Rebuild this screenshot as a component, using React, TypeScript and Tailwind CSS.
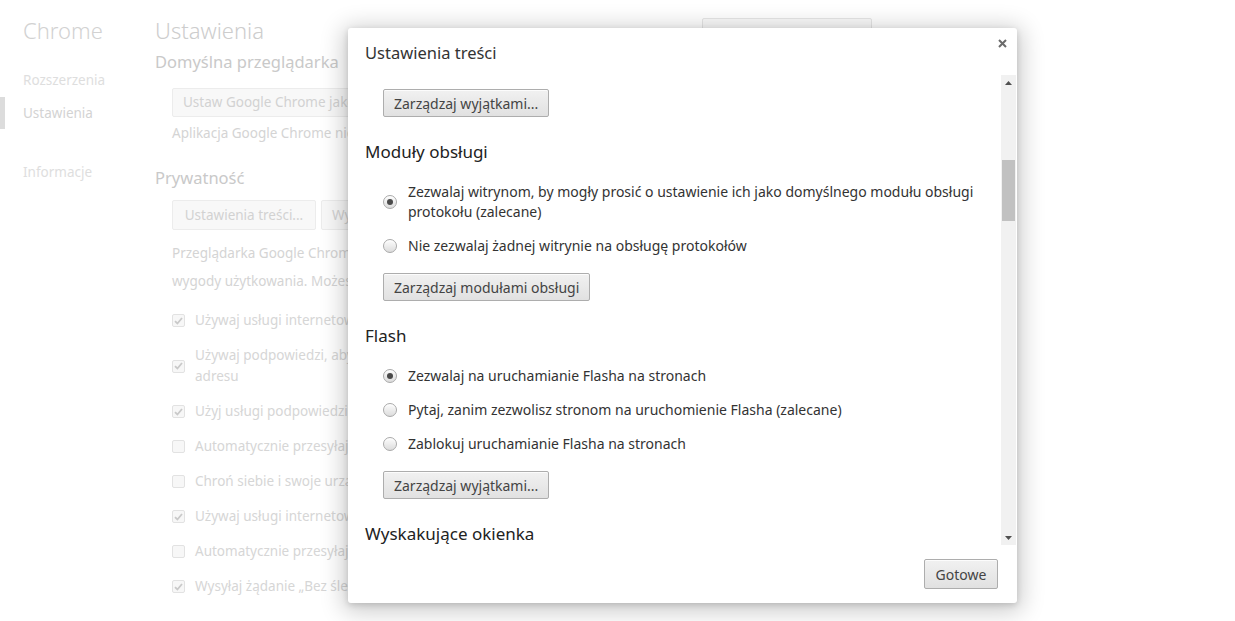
import React from 'react'

const font = { fontFamily: '"Noto Sans", "Open Sans", Arial, sans-serif' }

function FadedCheck({ checked }: { checked: boolean }) {
  return (
    <span className="w-[13px] h-[13px] shrink-0 rounded-[2px] border border-[#e2e2e2] bg-[#f7f7f7] flex items-center justify-center">
      {checked && (
        <svg width="9" height="8" viewBox="0 0 9 8">
          <path d="M1 4.2 L3.4 6.5 L8 1" fill="none" stroke="#c9c9c9" strokeWidth="1.8" />
        </svg>
      )}
    </span>
  )
}

function Radio({ checked }: { checked?: boolean }) {
  return (
    <span className="w-[14px] h-[14px] shrink-0 rounded-full border border-[#a9a9a9] bg-gradient-to-b from-[#fdfdfd] to-[#dcdcdc] shadow-[inset_0_1px_1px_rgba(255,255,255,0.9)] flex items-center justify-center">
      {checked && <span className="w-[6px] h-[6px] rounded-full bg-[#4a4a4a]" />}
    </span>
  )
}

function Btn({ children }: { children: React.ReactNode }) {
  return (
    <button className="h-[28px] px-[10px] rounded-[2px] border border-[#adadad] bg-gradient-to-b from-[#f1f1f1] to-[#e1e1e1] text-[14px] text-[#444] shadow-[inset_0_1px_0_rgba(255,255,255,0.8)]">
      {children}
    </button>
  )
}

function Option({ checked, children }: { checked?: boolean; children: React.ReactNode }) {
  return (
    <label className="flex items-center gap-[11px] pr-[8px]">
      <Radio checked={checked} />
      <span className="text-[14px] leading-[20px] text-[#333]">{children}</span>
    </label>
  )
}

function Section({ title, children }: { title: string; children?: React.ReactNode }) {
  return (
    <div className="mt-[23px]">
      <h3 className="text-[17px] leading-[24px] text-[#222]">{title}</h3>
      {children && <div className="mt-[18px] pl-[18px]">{children}</div>}
    </div>
  )
}

export default function App() {
  const bgChecks: [boolean, string, string?][] = [
    [true, 'Używaj usługi internetowej, aby pomóc w rozwiązywaniu błędów nawigacji'],
    [true, 'Używaj podpowiedzi, aby ułatwić wpisywanie zapytań i adresów w pasku', 'adresu'],
    [true, 'Użyj usługi podpowiedzi, aby łatwiej poprawić błędy pisowni'],
    [false, 'Automatycznie przesyłaj do Google niektóre informacje systemowe'],
    [false, 'Chroń siebie i swoje urządzenie przed niebezpiecznymi witrynami'],
    [true, 'Używaj usługi internetowej, aby poprawiać błędy pisowni'],
    [false, 'Automatycznie przesyłaj do Google statystyki użytkowania'],
    [true, 'Wysyłaj żądanie „Bez śledzenia” w ruchu przeglądania'],
  ]

  return (
    <div className="relative w-[1235px] h-[621px] overflow-hidden bg-white" style={font}>
      {/* faded settings page */}
      <div className="flex h-full">
        <aside className="w-[155px] shrink-0">
          <div className="pl-[23px] pt-[15px] text-[22px] leading-[30px] font-light text-[#d2d2d2]">Chrome</div>
          <nav className="mt-[19px] text-[13.5px] text-[#dedede]">
            <div className="pl-[23px] h-[32px] flex items-center">Rozszerzenia</div>
            <div className="h-[32px] flex items-center mt-[1px]">
              <span className="w-[5px] h-full bg-[#dcdcdc]" />
              <span className="pl-[18px] text-[#d3d3d3]">Ustawienia</span>
            </div>
            <div className="pl-[23px] h-[32px] flex items-center mt-[27px]">Informacje</div>
          </nav>
        </aside>
        <main className="flex-1 whitespace-nowrap">
          <div className="flex">
            <h1 className="w-[547px] pt-[15px] text-[22px] leading-[30px] font-light text-[#cdcdcd]">Ustawienia</h1>
            <div className="mt-[18px] w-[170px] h-[28px] rounded-[2px] border border-[#e6e6e6] bg-[#fafafa]" />
          </div>
          <h2 className="mt-[4px] text-[16.5px] leading-[24px] text-[#c9c9c9]">Domyślna przeglądarka</h2>
          <div className="pl-[17px]">
            <div className="mt-[14px] h-[29px] w-[300px] overflow-hidden rounded-[2px] border border-[#ececec] bg-[#f8f8f8] px-[10px] text-[13.5px] leading-[27px] text-[#d2d2d2]">
              Ustaw Google Chrome jako domyślną przeglądarkę
            </div>
            <p className="mt-[6px] text-[13.5px] leading-[20px] text-[#d4d4d4]">Aplikacja Google Chrome nie jest obecnie domyślną przeglądarką.</p>
          </div>
          <h2 className="mt-[23px] text-[16.5px] leading-[24px] text-[#c9c9c9]">Prywatność</h2>
          <div className="pl-[17px]">
            <div className="mt-[10px] flex gap-[5px]">
              <div className="h-[30px] w-[144px] rounded-[2px] border border-[#ececec] bg-[#f8f8f8] text-center text-[13.5px] leading-[28px] text-[#d2d2d2]">Ustawienia treści...</div>
              <div className="h-[30px] w-[200px] overflow-hidden rounded-[2px] border border-[#ececec] bg-[#f8f8f8] px-[10px] text-[13.5px] leading-[28px] text-[#d2d2d2]">Wyczyść dane przeglądania...</div>
            </div>
            <p className="mt-[9px] text-[13.5px] leading-[28px] text-[#d4d4d4]">
              Przeglądarka Google Chrome może korzystać z usług internetowych w celu zwiększenia
              <br />
              wygody użytkowania. Możesz wyłączyć te usługi.
            </p>
            <div className="mt-[15px] flex flex-col gap-[14px]">
              {bgChecks.map(([c, t, t2], i) => (
                <div key={i} className="flex items-center gap-[10px] text-[13.5px] leading-[21px] text-[#d6d6d6]">
                  <FadedCheck checked={c} />
                  <span>
                    {t}
                    {t2 && (
                      <>
                        <br />
                        {t2}
                      </>
                    )}
                  </span>
                </div>
              ))}
            </div>
          </div>
        </main>
      </div>

      {/* dialog */}
      <div className="absolute left-[348px] top-[28px] w-[669px] h-[575px] flex flex-col rounded-[3px] bg-white shadow-[0_4px_23px_5px_rgba(0,0,0,0.2),0_2px_6px_rgba(0,0,0,0.15)]">
        <div className="relative h-[45px] shrink-0 pl-[17px] pt-[13px]">
          <h2 className="text-[16.5px] leading-[24px] text-[#333]">Ustawienia treści</h2>
          <button className="absolute right-[10px] top-[10px] w-[10px] h-[10px] flex items-center justify-center">
            <svg width="9" height="9" viewBox="0 0 9 9">
              <path d="M1 1 L8 8 M8 1 L1 8" stroke="#6b6b6b" strokeWidth="2" />
            </svg>
          </button>
        </div>

        <div className="flex flex-1 min-h-0">
          <div className="flex-1 overflow-hidden pl-[17px]">
            <div className="pt-[16px] pl-[18px]">
              <Btn>Zarządzaj wyjątkami...</Btn>
            </div>
            <Section title="Moduły obsługi">
              <div className="flex flex-col gap-[14px]">
                <Option checked>
                  Zezwalaj witrynom, by mogły prosić o ustawienie ich jako domyślnego modułu obsługi protokołu (zalecane)
                </Option>
                <Option>Nie zezwalaj żadnej witrynie na obsługę protokołów</Option>
              </div>
              <div className="mt-[17px]">
                <Btn>Zarządzaj modułami obsługi</Btn>
              </div>
            </Section>
            <Section title="Flash">
              <div className="flex flex-col gap-[14px]">
                <Option checked>Zezwalaj na uruchamianie Flasha na stronach</Option>
                <Option>Pytaj, zanim zezwolisz stronom na uruchomienie Flasha (zalecane)</Option>
                <Option>Zablokuj uruchamianie Flasha na stronach</Option>
              </div>
              <div className="mt-[17px]">
                <Btn>Zarządzaj wyjątkami...</Btn>
              </div>
            </Section>
            <Section title="Wyskakujące okienka" />
          </div>

          <div className="w-[15px] shrink-0 mr-[1px] mt-[2px] bg-[#f1f1f1] flex flex-col">
            <div className="h-[15px] flex items-center justify-center">
              <svg width="7" height="4" viewBox="0 0 7 4">
                <path d="M0 4 L3.5 0 L7 4 Z" fill="#505050" />
              </svg>
            </div>
            <div className="mt-[70px] mx-[1px] h-[61px] bg-[#c1c1c1]" />
            <div className="flex-1" />
            <div className="h-[15px] flex items-center justify-center">
              <svg width="7" height="4" viewBox="0 0 7 4">
                <path d="M0 0 L7 0 L3.5 4 Z" fill="#505050" />
              </svg>
            </div>
          </div>
        </div>

        <div className="h-[58px] shrink-0 flex justify-end items-start pt-[14px] pr-[19px]">
          <button className="h-[30px] w-[74px] rounded-[2px] border border-[#adadad] bg-gradient-to-b from-[#f1f1f1] to-[#e1e1e1] text-[14px] text-[#444] shadow-[inset_0_1px_0_rgba(255,255,255,0.8)]">
            Gotowe
          </button>
        </div>
      </div>
    </div>
  )
}
